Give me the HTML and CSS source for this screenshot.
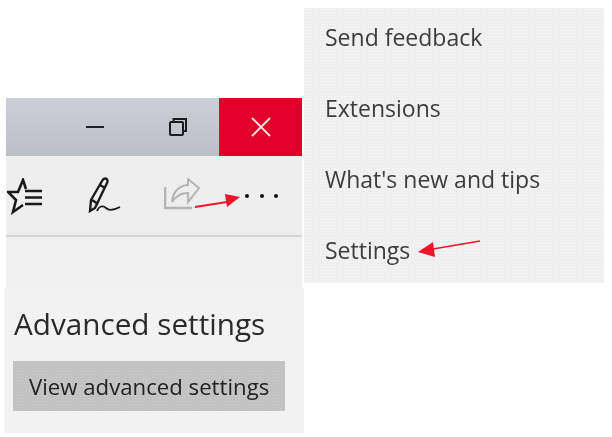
FILE: index.html
```html
<!DOCTYPE html>
<html lang="en">
<head>
<meta charset="utf-8">
<title>Edge settings</title>
<link rel="stylesheet" href="styles.css">
</head>
<body>
<div class="window">
  <div class="titlebar">
    <span class="winbtn">
      <svg width="20" height="20" viewBox="0 0 20 20"><path d="M1 10h18" stroke="#222" stroke-width="2" fill="none"/></svg>
    </span>
    <span class="winbtn">
      <svg width="20" height="20" viewBox="0 0 20 20" fill="none" stroke="#1c1c1c" stroke-width="2"><path d="M5.500 4V2H18V14H15"/><rect x="2" y="5" width="13" height="13" rx="1"/></svg>
    </span>
    <span class="closebtn">
      <svg width="20" height="20" viewBox="0 0 20 20"><path d="M1 1L19 19M19 1L1 19" stroke="#fbe4e8" stroke-width="1.800" fill="none"/></svg>
    </span>
  </div>
  <div class="toolbar">
    <svg class="ico-hub" width="37" height="37" viewBox="0 0 37 37" fill="none" stroke="#1a1a1a" stroke-width="2.600"><path d="M19 11L16 2L11 14H1L9 22L6 34L16 27"/><path d="M18 13H35M18 19.500H35M18 26H35"/></svg>
    <svg class="ico-pen" width="36" height="36" viewBox="0 0 36 36" fill="none" stroke="#1c1c1c" stroke-width="2.400"><path d="M3 34L4 23L15 4C17 0 22 1 20 6L8 31Z"/><path d="M5 23L11 27M13 8L18 11"/><path d="M10 34C12 29 16 28 19 31C22 34 27 33 33 30" stroke-width="1.800"/></svg>
    <svg class="ico-share" width="37" height="32" viewBox="0 0 37 32" fill="none" stroke="#b4b4b4" stroke-width="2"><path d="M1 9V30H28" stroke-width="2.500"/><path d="M8 24C9 14 14 8 24 7V1L35 10L24 24V15C17 15 12 18 8 24Z"/></svg>
    <span class="dots"><i></i><i></i><i></i></span>
  </div>
  <div class="toolbar-rest"></div>
  <svg class="arrow arrow-toolbar" width="46" height="20" viewBox="0 0 46 20"><path d="M0 15L32 10" stroke="#f0142d" stroke-width="1.800"/><path d="M45 5L30 2L32 15Z" fill="#f0142d"/></svg>
</div>

<div class="menu">
  <div class="menu-item">Send feedback</div>
  <div class="menu-item">Extensions</div>
  <div class="menu-item">What's new and tips</div>
  <div class="menu-item">Settings</div>
  <svg class="arrow arrow-menu" width="64" height="22" viewBox="0 0 64 22"><path d="M16 10L63 2" stroke="#f0142d" stroke-width="1.600"/><path d="M1 13L16 3L18 18Z" fill="#f0142d"/></svg>
</div>

<section class="advanced">
  <h2 class="adv-title">Advanced settings</h2>
  <div class="adv-button">View advanced settings</div>
</section>
</body>
</html>
```
FILE: styles.css
```css
* { box-sizing: border-box; }
html, body { margin: 0; padding: 0; }
body {
  position: relative;
  width: 612px;
  height: 437px;
  background: #fff;
  overflow: hidden;
  font-family: "Open Sans", "Noto Sans", sans-serif;
}
.window {
  position: absolute;
  left: 6px;
  top: 98px;
  width: 296px;
  height: 190px;
  display: flex;
  flex-direction: column;
  background: #eeeeee;
  filter: blur(0.5px);
}
.titlebar {
  height: 58px;
  display: flex;
  justify-content: flex-end;
  background: linear-gradient(#ccd0d6, #bcc0c6);
}
.winbtn {
  width: 83px;
  display: flex;
  align-items: center;
  justify-content: center;
}
.closebtn {
  width: 83px;
  display: flex;
  align-items: center;
  justify-content: center;
  background: #e0002a;
}
.toolbar {
  height: 81px;
  border-bottom: 2px solid #d4d4d4;
  position: relative;
}
.ico-hub { position: absolute; left: 1px; top: 22px; }
.ico-pen { position: absolute; left: 81px; top: 21px; }
.ico-share { position: absolute; left: 158px; top: 22px; }
.dots {
  position: absolute;
  left: 239px;
  top: 38px;
  display: flex;
  gap: 10.500px;
}
.dots i {
  display: block;
  width: 4px;
  height: 4px;
  border-radius: 50%;
  background: #111;
}
.toolbar-rest { flex: 1; background: #f0f0f0; }
.arrow { position: absolute; }
.arrow-toolbar { left: 189px; top: 94px; }
.menu {
  position: absolute;
  left: 304px;
  top: 8px;
  width: 300px;
  height: 275px;
  padding: 13px 0 0 21px;
  display: flex;
  flex-direction: column;
  gap: 39px;
  background-color: #efefef;
  background-image: radial-gradient(#f8f8f8 0.7px, transparent 1px);
  background-size: 3px 3px;
  filter: blur(0.6px);
}
.menu-item {
  font-size: 23px;
  line-height: 32px;
  color: #3c3c3c;
  white-space: nowrap;
}
.arrow-menu { left: 113px; top: 231px; }
.advanced {
  position: absolute;
  left: 5px;
  top: 288px;
  width: 299px;
  height: 145px;
  padding: 17px 8px 0;
  background: #f2f2f2;
  filter: blur(0.4px);
}
.adv-title {
  margin: 0 0 0 1px;
  font-size: 29.700px;
  line-height: 38px;
  font-weight: 400;
  color: #2a2a2a;
  white-space: nowrap;
}
.adv-button {
  margin-top: 18px;
  width: 272px;
  height: 50px;
  padding-left: 16px;
  background-color: #c2c2c2;
  background-image: radial-gradient(#cacaca 0.5px, transparent 1px);
  background-size: 3px 3px;
  font-size: 22.200px;
  line-height: 52px;
  color: #222;
  white-space: nowrap;
}
```
